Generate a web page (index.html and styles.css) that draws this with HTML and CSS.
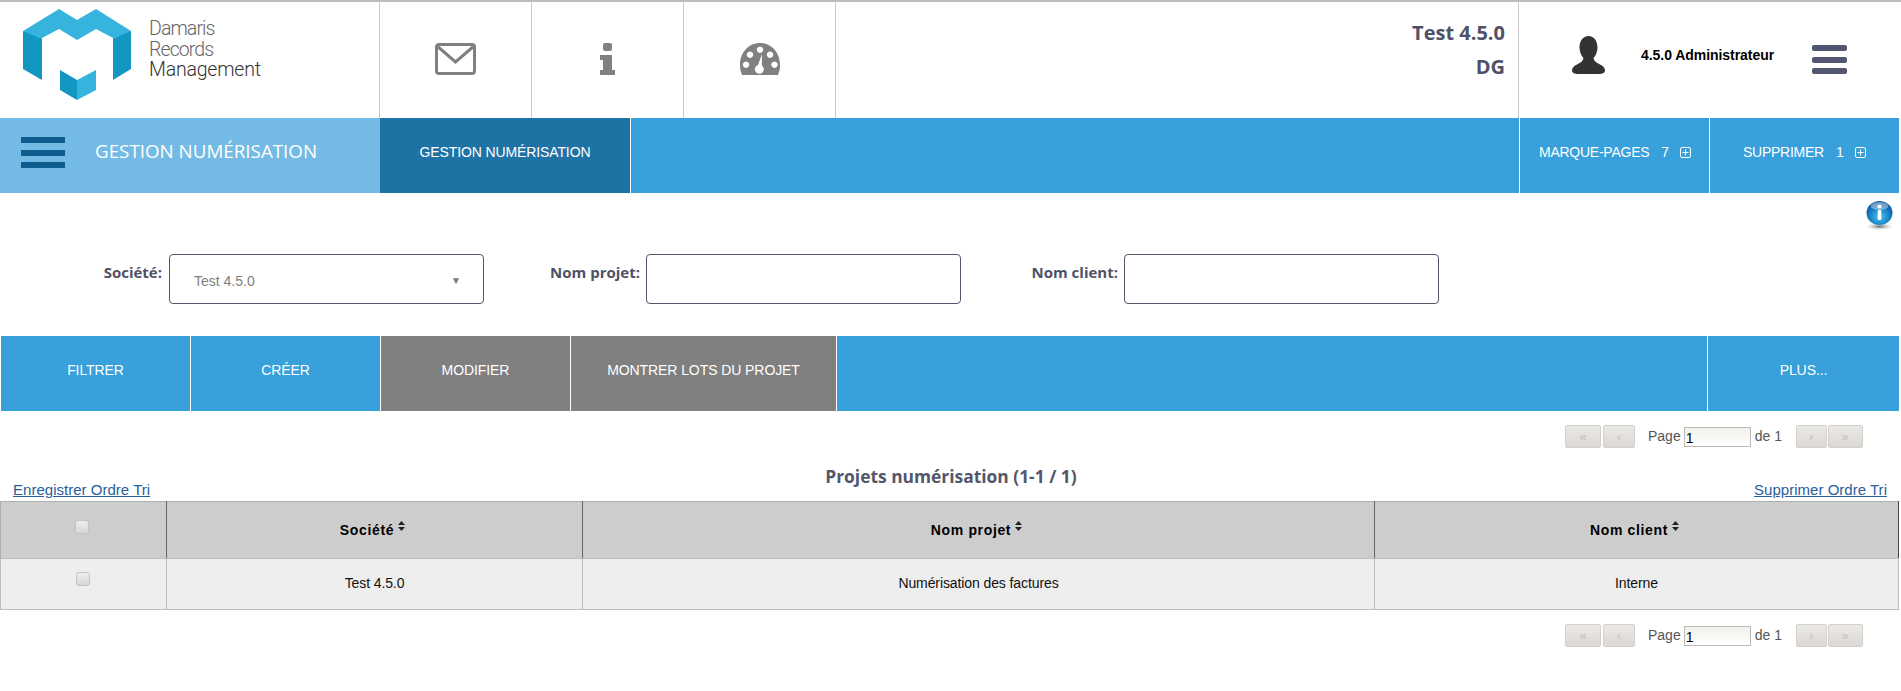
FILE: index.html
```html
<!DOCTYPE html>
<html lang="fr">
<head>
<meta charset="utf-8">
<title>Gestion numérisation</title>
<link rel="stylesheet" href="styles.css">
</head>
<body>
<header class="topbar">
  <div class="brand">
    <svg class="logo" viewBox="22 9 108 91" width="108" height="91">
      <path fill="#36b4dd" d="M22 31 58 9 76 20 95 9 130 31 112 42V38L95 29 76 40 58 29 41 38V42Z"/>
      <path fill="#1297c2" d="M22 31 41 39V80L22 69Z"/>
      <path fill="#1297c2" d="M130 31 112 39V80L130 69Z"/>
      <path fill="#1297c2" d="M59 70 76 80V100L59 90Z"/>
      <path fill="#36b4dd" d="M95 70 76 80V100L95 90Z"/>
    </svg>
    <div class="brand-name"><span class="brand-light">Damaris</span><span class="brand-light">Records</span><span class="brand-strong">Management</span></div>
  </div>
  <a class="top-icon">
    <svg viewBox="0 0 41 32" width="41" height="32"><rect x="1.5" y="1.5" width="38" height="29" rx="2.5" fill="none" stroke="#808080" stroke-width="3"/><path d="M2 3 20.5 19 39 3" fill="none" stroke="#808080" stroke-width="3"/></svg>
  </a>
  <a class="top-icon">
    <svg viewBox="0 0 15 32" width="15" height="32"><rect x="3" y="0" width="9" height="8" rx="2" fill="#808080"/><path fill="#808080" d="M0 12H12V27H15V32H0V27H3V17H0Z"/></svg>
  </a>
  <a class="top-icon">
    <svg viewBox="0 0 40 32" width="40" height="32"><path fill="#808080" fill-rule="evenodd" d="M2 32C.5 28 0 26 0 22 0 9 9 0 20 0S40 9 40 22C40 26 39.500 28 38 32ZM20 3.500a3.200 3.200 0 1 0 .01 0ZM10 8.500a3.200 3.200 0 1 0 .01 0ZM30 8.500a3.200 3.200 0 1 0 .01 0ZM6 18.500a3.200 3.200 0 1 0 .01 0ZM34.500 18.500a3.200 3.200 0 1 0 .01 0ZM22 11 18 22a4.500 4.500 0 1 0 3.800 .5Z"/></svg>
  </a>
  <div class="org"><span>Test 4.5.0</span><span>DG</span></div>
  <div class="account">
    <svg class="avatar" viewBox="0 0 33 38" width="33" height="38"><path fill="#333" d="M16.500 0C22 0 25.500 5 25.500 11.500 25.500 16 23.500 20 21.500 22 22 25 24 26.500 28 28.500 31.500 30 33 32 33 34.500 33 37 30 38 27 38H6C3 38 0 37 0 34.500 0 32 1.500 30 5 28.500 9 26.500 11 25 11.500 22 9.500 20 7.500 16 7.500 11.500 7.500 5 11 0 16.500 0Z"/></svg>
    <span class="user">4.5.0 Administrateur</span>
    <span class="burger burger-top"><i></i><i></i><i></i></span>
  </div>
</header>

<nav class="navbar">
  <div class="nav-title">
    <span class="burger burger-nav"><i></i><i></i><i></i></span>
    <span class="nav-title-text">GESTION NUMÉRISATION</span>
  </div>
  <a class="nav-tab">GESTION NUMÉRISATION</a>
  <div class="spacer"></div>
  <a class="nav-side nav-side-a">MARQUE-PAGES<b>7</b><svg viewBox="0 0 11 11" width="11" height="11"><rect x=".5" y=".5" width="10" height="10" rx="1.500" fill="none" stroke="#fff"/><path d="M5.500 2.500v6M2.500 5.500h6" stroke="#fff"/></svg></a>
  <a class="nav-side nav-side-b">SUPPRIMER<b>1</b><svg viewBox="0 0 11 11" width="11" height="11"><rect x=".5" y=".5" width="10" height="10" rx="1.500" fill="none" stroke="#fff"/><path d="M5.500 2.500v6M2.500 5.500h6" stroke="#fff"/></svg></a>
</nav>

<section class="filters">
  <svg class="help" viewBox="0 0 29 29" width="29" height="29">
    <defs>
      <radialGradient id="globe" cx="50%" cy="65%" r="62%"><stop offset="0" stop-color="#45c8ec"/><stop offset=".6" stop-color="#1b82c6"/><stop offset="1" stop-color="#0b4f96"/></radialGradient>
      <radialGradient id="shade" cx="50%" cy="50%" r="50%"><stop offset="0" stop-color="#666"/><stop offset="1" stop-color="#ccc" stop-opacity="0"/></radialGradient>
    </defs>
    <ellipse cx="14.500" cy="25.500" rx="14" ry="3.500" fill="url(#shade)"/>
    <ellipse cx="14.500" cy="12" rx="13" ry="12" fill="url(#globe)"/>
    <ellipse cx="14.500" cy="5" rx="9" ry="4" fill="#fff" fill-opacity=".4"/>
    <circle cx="14.500" cy="5.500" r="2" fill="#fff"/>
    <rect x="12.700" y="9" width="3.600" height="10" rx="1" fill="#fff"/>
  </svg>
  <label class="field field-a"><span class="field-label">Société:</span>
    <span class="select"><span>Test 4.5.0</span><i class="caret">▼</i></span>
  </label>
  <label class="field field-b"><span class="field-label">Nom projet:</span><input class="text-input" type="text"></label>
  <label class="field field-c"><span class="field-label">Nom client:</span><input class="text-input" type="text"></label>
</section>

<div class="actions">
  <a class="action">FILTRER</a>
  <a class="action">CRÉER</a>
  <a class="action action-off">MODIFIER</a>
  <a class="action action-off action-wide">MONTRER LOTS DU PROJET</a>
  <div class="spacer"></div>
  <a class="action action-more">PLUS...</a>
</div>

<div class="pager pager-top">
  <button class="pg pg-first">«</button><button class="pg pg-prev">‹</button>
  <span class="pg-label pg-page">Page</span><input class="pg-input" value="1"><span class="pg-label pg-of">de 1</span>
  <button class="pg pg-next">›</button><button class="pg pg-last">»</button>
</div>

<div class="caption">
  <a class="sort-link">Enregistrer Ordre Tri</a>
  <h2>Projets numérisation (1-1 / 1)</h2>
  <a class="sort-link">Supprimer Ordre Tri</a>
</div>

<table class="grid">
  <colgroup><col class="c1"><col class="c2"><col class="c3"><col class="c4"></colgroup>
  <thead>
    <tr>
      <th><input class="check check-h" type="checkbox"></th>
      <th><span class="th-text">Société</span><svg class="sort" viewBox="0 0 7 10" width="7" height="10"><path d="M3.500 0 7 4H0ZM0 6H7L3.500 10Z" fill="#222"/></svg></th>
      <th><span class="th-text">Nom projet</span><svg class="sort" viewBox="0 0 7 10" width="7" height="10"><path d="M3.500 0 7 4H0ZM0 6H7L3.500 10Z" fill="#222"/></svg></th>
      <th><span class="th-text">Nom client</span><svg class="sort" viewBox="0 0 7 10" width="7" height="10"><path d="M3.500 0 7 4H0ZM0 6H7L3.500 10Z" fill="#222"/></svg></th>
    </tr>
  </thead>
  <tbody>
    <tr>
      <td><input class="check check-r" type="checkbox"></td>
      <td>Test 4.5.0</td>
      <td>Numérisation des factures</td>
      <td>Interne</td>
    </tr>
  </tbody>
</table>

<div class="pager pager-bottom">
  <button class="pg pg-first">«</button><button class="pg pg-prev">‹</button>
  <span class="pg-label pg-page">Page</span><input class="pg-input" value="1"><span class="pg-label pg-of">de 1</span>
  <button class="pg pg-next">›</button><button class="pg pg-last">»</button>
</div>
</body>
</html>
```
FILE: styles.css
```css
* { box-sizing: border-box; }
html, body { margin: 0; padding: 0; background: #fff; height: 100%; overflow: hidden; }
body { font-family: "Liberation Sans", Arial, sans-serif; font-size: 14px; color: #222; width: 1901px; height: 691px; }
a { text-decoration: none; }
.spacer { flex: 1; }

.topbar { display: flex; height: 118px; border-top: 2px solid #bdbdbd; width: 1901px; }
.brand { width: 380px; flex: none; display: flex; padding: 7px 0 0 23px; border-right: 1px solid #c8c8c8; }
.logo { flex: none; }
.brand-name { display: flex; flex-direction: column; margin: 10px 0 0 18px; font-family: Roboto, sans-serif; font-weight: 300; font-size: 19.500px; line-height: 20.500px; color: #666; letter-spacing: -.2px; }
.brand-light { letter-spacing: -.9px; }
.brand-strong { color: #333; }
.top-icon { width: 152px; flex: none; display: flex; align-items: center; justify-content: center; border-right: 1px solid #c8c8c8; padding-bottom: 3px; }
.org { flex: 1; display: flex; flex-direction: column; align-items: flex-end; padding: 14px 13px 0 0; font-family: "Open Sans", sans-serif; font-weight: 700; font-size: 20px; line-height: 34px; color: #4f5166; }
.account { width: 383px; flex: none; display: flex; align-items: flex-start; border-left: 1px solid #c8c8c8; }
.avatar { margin: 34px 0 0 53px; flex: none; }
.user { margin: 44px 0 0 36px; font-weight: 700; font-size: 14px; line-height: 18px; letter-spacing: -.05px; color: #000; width: 171px; white-space: nowrap; }
.burger { display: flex; flex-direction: column; flex: none; }
.burger i { display: block; }
.burger-top { margin-top: 43px; width: 35px; gap: 5.500px; }
.burger-top i { height: 6px; border-radius: 2px; background: #535670; }
.burger-nav { width: 44px; gap: 6.500px; }
.burger-nav i { height: 6px; background: #0f5c8f; }

.navbar { display: flex; height: 75px; width: 1899px; background: #38a0da; color: #fff; }
.nav-title { width: 380px; flex: none; display: flex; align-items: center; background: #73bae4; padding: 0 0 6px 21px; }
.nav-title-text { margin-left: 30px; padding-bottom: 3px; font-family: "Open Sans", sans-serif; font-size: 18.800px; white-space: nowrap; }
.nav-tab { width: 251px; flex: none; display: flex; align-items: center; justify-content: center; background: #1f72a4; color: #fff; font-size: 14px; letter-spacing: -.12px; padding-bottom: 7px; border-right: 1px solid #fff; }
.nav-side { width: 190px; flex: none; display: flex; align-items: center; color: #fff; font-size: 14px; letter-spacing: -.25px; border-left: 1px solid #fff; padding-bottom: 7px; white-space: nowrap; }
.nav-side b { font-weight: 400; margin: 0 11px 0 12px; }
.nav-side-a { padding-left: 19px; }
.nav-side-b { padding-left: 33px; }

.filters { position: relative; height: 143px; width: 1898px; display: flex; }
.help { position: absolute; right: 4px; top: 8px; }
.field { display: flex; align-items: flex-start; justify-content: flex-end; flex: none; margin-top: 61px; }
.field-label { font-family: "Open Sans", sans-serif; font-weight: 700; font-size: 15px; line-height: 22px; color: #4f5166; margin-right: 6px; white-space: nowrap; margin-top: 7px; }
.field-a { width: 484px; }
.field-a .field-label { margin-right: 7px; }
.field-b { width: 477px; }
.field-c { width: 478px; }
.text-input, .select { width: 315px; height: 50px; border: 1px solid #55566a; border-radius: 4px; background: #fff; display: block; flex: none; padding: 0; margin: 0; }
.select { display: flex; align-items: center; justify-content: space-between; padding: 3px 22px 0 24px; font-size: 14px; color: #808080; }
.caret { font-style: normal; font-size: 10px; color: #777; }

.actions { display: flex; height: 75px; width: 1898px; margin-left: 1px; background: #38a0da; }
.action { width: 190px; flex: none; display: flex; align-items: center; justify-content: center; color: #fff; font-size: 14px; letter-spacing: -.08px; border-right: 1px solid #fff; padding-bottom: 7px; }
.action-off { background: #808080; }
.action-wide { width: 266px; }
.action-more { border-right: 0; border-left: 1px solid #fff; width: 192px; }

.pager { display: flex; align-items: center; height: 23px; padding-left: 1565px; white-space: nowrap; }
.pager-top { margin-top: 14px; }
.pager-bottom { margin-top: 14px; }
.pg { height: 23px; padding: 0; margin: 0 2px 0 0; border: 1px solid #d3d0cc; border-radius: 2px; background: linear-gradient(#ebe9e6, #dbd8d5); color: #c3c0bc; font-family: "Liberation Sans", sans-serif; font-size: 13px; line-height: 18px; flex: none; }
.pg-first { width: 36px; }
.pg-prev { width: 32px; }
.pg-next { width: 31px; margin-left: 15px; margin-right: 1px; }
.pg-last { width: 35px; margin-right: 0; }
.pg-label { font-size: 14px; color: #555; flex: none; }
.pg-page { margin-left: 11px; position: relative; top: -1px; }
.pg-input { width: 67px; height: 20px; margin: 0 0 0 3px; padding: 2px 0 0 1px; border: 1px solid #bdbab5; background: linear-gradient(#f2f0ec, #fff); font-family: "Liberation Sans", sans-serif; font-size: 14px; color: #000; flex: none; }
.pg-of { margin-left: 4px; width: 26px; position: relative; top: -1px; }

.caption { position: relative; display: flex; justify-content: space-between; align-items: flex-end; padding: 0 12px 0 13px; height: 53px; width: 1899px; }
.caption h2 { position: absolute; left: 0; right: 0; top: 16px; margin: 0; text-align: center; padding-left: 3px; font-family: "Open Sans", sans-serif; font-weight: 700; font-size: 17.400px; line-height: 24px; color: #54566a; }
.sort-link { font-size: 15px; line-height: 16px; letter-spacing: .02px; color: #2a5e9c; text-decoration: underline; position: relative; padding-bottom: 3px; }

.grid { border-collapse: collapse; table-layout: fixed; width: 1898px; }
.c1 { width: 166px; }
.c2 { width: 416px; }
.c3 { width: 792px; }
.c4 { width: 524px; }
.grid th { height: 57px; background: #cdcdcd; border: 1px solid #b0b0b0; border-left-color: #666; border-right-color: #666; border-bottom-color: #bdbdbd; font-size: 14px; color: #000; font-weight: 700; letter-spacing: .65px; text-align: center; vertical-align: middle; padding: 0 4px 0 0; }
.grid th:first-child { border-left-color: #b0b0b0; }
.grid th:last-child { border-right-color: #444; }
.grid td { height: 51px; background: #eee; border: 1px solid #bdbdbd; font-size: 14px; letter-spacing: -.1px; color: #111; text-align: center; vertical-align: middle; padding: 0 0 2px; }
.sort { margin-left: 4px; position: relative; top: -4px; }
.check { appearance: none; display: block; width: 14px; height: 14px; margin: 0 auto; border: 1px solid #c2c2c2; border-radius: 3px; background: linear-gradient(#eee, #d6d6d6); position: relative; }
.check-h { top: -3px; left: 0; }
.check-r { top: -4px; left: -1px; }
```
